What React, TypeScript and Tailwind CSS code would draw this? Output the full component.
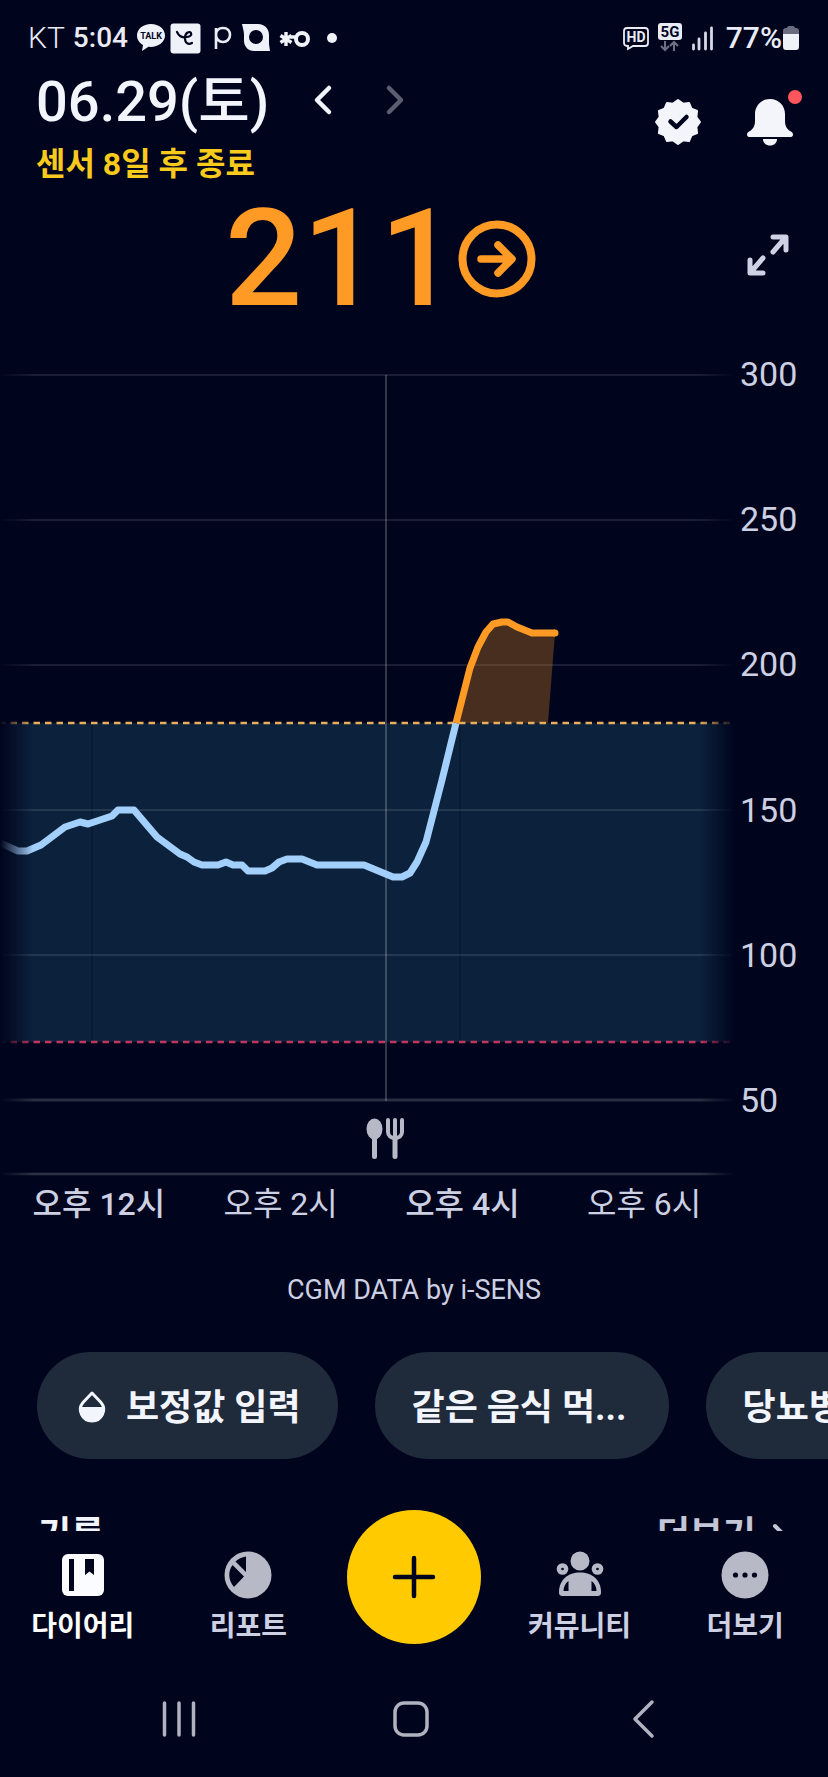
import type { ReactNode } from "react";

const GRID_LEVELS = [300, 250, 200, 150, 100, 50];

const HOURS = [
  { label: "오후 12시", major: true },
  { label: "오후 2시", major: false },
  { label: "오후 4시", major: true },
  { label: "오후 6시", major: false },
];

const IN_RANGE =
  "0,469 18,477 27,477 41,471 53,462 65,453 80,448 88,450 112,442 118,436 134,436 157,463 180,480 187,483 194,488 202,491 218,491 226,488 233,491 242,491 248,497 265,497 272,494 279,488 287,485 302,485 317,491 364,491 393,503 402,503 410,499 417,488 426,468 434,437 442,406 456,349";
const ABOVE_RANGE =
  "456,349 470,294 478,273 486,258 493,250 502,248 508,248 517,253 532,259 555,259";

// 12-pointed rosette, points alternate between the outer and inner radius
const ROSETTE = Array.from({ length: 24 }, (_, i) => {
  const r = i % 2 === 0 ? 22 : 19;
  const a = (i * Math.PI) / 12;
  return `${(24 + r * Math.sin(a)).toFixed(2)},${(24 - r * Math.cos(a)).toFixed(2)}`;
}).join(" ");

function StatusBar() {
  return (
    <div className="flex h-16 items-center justify-between pt-3 pl-7 pr-7 text-[#e9ebf5]">
      <div className="flex items-center">
        <span className="text-3xl font-light leading-9">KT</span>
        <span className="ml-2 text-[28px] font-medium leading-9">5:04</span>
        <svg className="ml-2 h-[30px] w-[30px] overflow-visible" viewBox="0 0 30 30">
          <path d="M15 1C7 1 1 6 1 12.500c0 4 2.500 7.500 6 9.500l-1 6 6.500-4.200c8.500 1 16.500-4 16.500-11.300C29 6 23 1 15 1z" fill="#f0f2fa" />
          <text x="15" y="16" textAnchor="middle" fontSize="9" fontWeight="700" fill="#00051d">TALK</text>
        </svg>
        <svg className="ml-1 h-[31px] w-[31px]" viewBox="0 0 31 31">
          <rect x="0.500" y="0.500" width="30" height="30" rx="3" fill="#f0f2fa" />
          <path d="M7 9c2 4 5 6 9 5 4 0 6-2 5-4s-6-1-6 5c0 5 3 7 7 5" fill="none" stroke="#00051d" strokeWidth="2.200" strokeLinecap="round" />
        </svg>
        <svg className="ml-3 h-[30px] w-5" viewBox="0 0 20 30">
          <path d="M3 26V5M3 12c0-4 2.500-7 7-7s7 3 7 7-3 7-7 7-7-3-7-7z" fill="none" stroke="#e9ebf5" strokeWidth="2.600" />
        </svg>
        <svg className="ml-2 h-[30px] w-[30px]" viewBox="0 0 30 30">
          <path fillRule="evenodd" d="M1 1h16c7 0 11 5 11 11v9l1 7H13C7 28 3 23 3 18v-6C3 8 2 6 1 1zM15 7a7 7 0 1 0 0 14a7 7 0 1 0 0-14z" fill="#f0f2fa" />
        </svg>
        <svg className="ml-2 h-[30px] w-8" viewBox="0 0 32 30">
          <path d="M7 9v14M1.500 12.500l11 7M12.500 12.500l-11 7M11 14h6" fill="none" stroke="#f0f2fa" strokeWidth="3.400" />
          <circle cx="23" cy="16" r="6" fill="none" stroke="#f0f2fa" strokeWidth="4" />
        </svg>
        <span className="ml-4 size-[10px] rounded-full bg-[#f0f2fa]" />
      </div>

      <div className="flex items-center">
        <svg className="h-[26px] w-7 overflow-visible" viewBox="0 0 28 26">
          <path d="M5 3h18a3 3 0 0 1 3 3v12a3 3 0 0 1-3 3H11l-5 3v-3H5a3 3 0 0 1-3-3V6a3 3 0 0 1 3-3z" fill="none" stroke="#e9ebf5" strokeWidth="1.800" />
          <text x="14" y="17" textAnchor="middle" fontSize="14" fontWeight="700" fill="#e9ebf5">HD</text>
        </svg>
        <svg className="ml-2 h-[30px] w-6 overflow-visible" viewBox="0 0 24 30">
          <rect width="24" height="17" rx="3" fill="#e9ebf5" />
          <text x="12" y="14" textAnchor="middle" fontSize="15" fontWeight="700" fill="#00051d">5G</text>
          <path d="M7 18v9m-4-4l4 4 4-4M16 28v-9m-4 4l4-4 4 4" fill="none" stroke="#6d7085" strokeWidth="2" />
        </svg>
        <svg className="ml-2 h-[26px] w-6" viewBox="0 0 24 26">
          <path d="M3.500 20v4M9 14v10M15.500 8v16M21.500 3v21" stroke="#d5d8e6" strokeWidth="2.800" strokeLinecap="round" />
        </svg>
        <span className="ml-3 text-3xl font-medium leading-9">77%</span>
        <svg className="h-[26px] w-[18px]" viewBox="0 0 18 26">
          <path d="M5 3c0-1 1-2 2-2h4c1 0 2 1 2 2h1c2 0 3 1 3 3v3H1V6c0-2 1-3 3-3z" fill="#6a6c80" />
          <path d="M1 9h16v12c0 3-1 4-3 4H4c-2 0-3-1-3-4z" fill="#f0f2fa" />
        </svg>
      </div>
    </div>
  );
}

function Header() {
  return (
    <header className="flex items-start justify-between pl-9 pr-6">
      <div>
        <div className="flex items-center">
          <h1 className="pt-1 text-[56px] font-medium leading-[68px] text-[#f2f5fc]">06.29(토)</h1>
          <button aria-label="이전 날짜" className="ml-9 flex h-12 w-9 items-center justify-center">
            <svg className="h-8 w-6" viewBox="0 0 24 32">
              <path d="M18 4L6 16l12 12" fill="none" stroke="#f2f5fc" strokeWidth="4.500" strokeLinecap="round" strokeLinejoin="round" />
            </svg>
          </button>
          <button aria-label="다음 날짜" className="ml-9 flex h-12 w-9 items-center justify-center">
            <svg className="h-8 w-6" viewBox="0 0 24 32">
              <path d="M6 4l12 12L6 28" fill="none" stroke="#5b5e70" strokeWidth="4.500" strokeLinecap="round" strokeLinejoin="round" />
            </svg>
          </button>
        </div>
        <p className="mt-1 text-[32px] font-bold leading-[48px] text-[#f7ca1c]">센서 8일 후 종료</p>
      </div>

      <div className="mt-[34px] flex items-center gap-11 pr-[10px]">
        <button aria-label="인증">
          <svg className="size-12" viewBox="0 0 48 48">
            <polygon points={ROSETTE} fill="#f3f5fb" stroke="#f3f5fb" strokeWidth="2" strokeLinejoin="round" />
            <path d="M16.500 23.500l6 5.500 10-10" fill="none" stroke="#00051d" strokeWidth="4.500" strokeLinecap="round" strokeLinejoin="round" />
          </svg>
        </button>
        <button aria-label="알림" className="relative">
          <svg className="size-12" viewBox="0 0 48 48">
            <path d="M24 1C15 1 9 8 9 16v7c0 5-2 8-5 10-2 1-3 2-3 3.500S2 39 3 39h42c1 0 2-1 2-2.500S46 34 44 33c-3-2-5-5-5-10v-7C39 8 33 1 24 1z" fill="#f3f5fb" />
            <path d="M17 41h14c0 4-3 6.500-7 6.500s-7-2.500-7-6.500z" fill="#f3f5fb" />
          </svg>
          <span className="absolute -right-2 -top-2 size-[14px] rounded-full bg-[#ff565c]" />
        </button>
      </div>
    </header>
  );
}

function Reading() {
  return (
    <section className="mt-2 flex h-[126px] items-center pl-4 pr-[38px]">
      <div className="flex flex-1 items-center justify-center">
        <strong className="text-[136px] font-medium leading-[126px] text-[#ff9a24]">211</strong>
        <svg className="size-20" viewBox="0 0 80 80" role="img" aria-label="변화 없음">
          <circle cx="40" cy="40" r="34.500" fill="none" stroke="#ff9a24" strokeWidth="8" />
          <path d="M24 40h30M41 26l14 14-14 14" fill="none" stroke="#ff9a24" strokeWidth="7.500" strokeLinecap="round" strokeLinejoin="round" />
        </svg>
      </div>
      <button aria-label="확대" className="mb-2">
        <svg className="size-11" viewBox="0 0 44 44">
          <path d="M27 4h13v13M39 5L27 19M4 27v13h13M5 39l12-14" fill="none" stroke="#cfd2e4" strokeWidth="5" strokeLinecap="round" strokeLinejoin="round" />
        </svg>
      </button>
    </section>
  );
}

function Chart() {
  return (
    <section className="mt-[52px]">
      <div className="flex">
        <svg className="h-auto min-w-0 flex-1" viewBox="0 0 735 728" role="img" aria-label="혈당 그래프">
          <defs>
            <linearGradient id="edge" gradientUnits="userSpaceOnUse" x1="0" y1="0" x2="735" y2="0">
              <stop offset="0" stopColor="#fff" stopOpacity="0" />
              <stop offset="0.045" stopColor="#fff" />
              <stop offset="0.952" stopColor="#fff" />
              <stop offset="1" stopColor="#fff" stopOpacity="0" />
            </linearGradient>
            <mask id="fade" maskUnits="userSpaceOnUse" x="0" y="0" width="735" height="728">
              <rect width="735" height="728" fill="url(#edge)" />
            </mask>
          </defs>
          <g mask="url(#fade)">
            <rect y="349" width="735" height="319" fill="#0c223c" />
            <path d="M92 349v319M460 349v319" stroke="#081b34" strokeWidth="2" />
            {GRID_LEVELS.map((level, i) => (
              <path
                key={level}
                d={`M0 ${1 + i * 145}H735`}
                stroke="#fff"
                strokeOpacity={level === 50 ? 0.16 : 0.1}
                strokeWidth={level === 50 ? 3 : 2}
              />
            ))}
            <path d="M386 1v726" stroke="#fff" strokeOpacity="0.2" strokeWidth="2" />
            <polygon points={`${ABOVE_RANGE} 548,349`} fill="#ff9a24" fillOpacity="0.28" />
            <path d="M-1 349H735" stroke="#e8ae5c" strokeWidth="2.500" strokeDasharray="6.5 5" />
            <path d="M-1 668H735" stroke="#c2355f" strokeWidth="2.500" strokeDasharray="6.5 5" />
            <polyline points={IN_RANGE} fill="none" stroke="#a3cffb" strokeWidth="7" strokeLinejoin="round" />
            <polyline points={ABOVE_RANGE} fill="none" stroke="#ff9a24" strokeWidth="7" strokeLinejoin="round" />
            <circle cx="555" cy="259" r="3.500" fill="#ff9a24" />
          </g>
        </svg>
        <div className="flex w-[93px] flex-col justify-between pb-[2px] pl-[5px] text-[34px] text-[#cdd0e2]">
          {GRID_LEVELS.map((level) => (
            <span key={level} className="flex h-0 items-center leading-10">
              {level}
            </span>
          ))}
        </div>
      </div>

      <div className="pr-[93px]">
        <svg className="h-auto w-full" viewBox="0 0 735 74">
          <g fill="#b7b9c6">
            <ellipse cx="374.500" cy="27" rx="8" ry="10.500" />
            <rect x="372" y="34" width="5" height="23" rx="2.500" />
            <rect x="392.500" y="34" width="5" height="23" rx="2.500" />
          </g>
          <path d="M388 18v12c0 4 3 6 7 6s7-2 7-6V18M395 18v18" fill="none" stroke="#b7b9c6" strokeWidth="4" strokeLinecap="round" />
          <path d="M0 72H735" stroke="url(#line)" strokeWidth="2.500" />
          <defs>
            <linearGradient id="line" gradientUnits="userSpaceOnUse" x1="0" y1="0" x2="735" y2="0">
              <stop offset="0" stopColor="#2e3144" stopOpacity="0" />
              <stop offset="0.045" stopColor="#2e3144" />
              <stop offset="0.952" stopColor="#2e3144" />
              <stop offset="1" stopColor="#2e3144" stopOpacity="0" />
            </linearGradient>
          </defs>
        </svg>
        <div className="grid h-14 grid-cols-4 items-center pl-2 text-center text-[32px] leading-[52px] text-[#cdd0e2]">
          {HOURS.map(({ label, major }) => (
            <span key={label} className={major ? "font-medium" : "font-normal"}>
              {label}
            </span>
          ))}
        </div>
      </div>
    </section>
  );
}

function Chip({ icon, children }: { icon?: ReactNode; children: ReactNode }) {
  return (
    <button className="flex h-[107px] min-w-[294px] shrink-0 items-center gap-[18px] whitespace-nowrap rounded-full bg-[#1f2a3b] px-[37px] pt-1 text-4xl font-bold text-[#f2f5fc]">
      {icon}
      {children}
    </button>
  );
}

function DropIcon() {
  return (
    <svg className="ml-[2px] h-9 w-8" viewBox="0 0 32 36">
      <path d="M16 3l9 9.500c6 7 1 18.500-9 18.500S1 19.500 7 12.500z" fill="none" stroke="#f2f5fc" strokeWidth="3" strokeLinejoin="round" />
      <path d="M3.500 17h25c1 8-4 15-12.500 15S2.500 25 3.500 17z" fill="#f2f5fc" />
    </svg>
  );
}

function Tab({ label, active, children }: { label: string; active?: boolean; children: ReactNode }) {
  return (
    <a href="#" className={`flex flex-col items-center pt-5 ${active ? "text-white" : "text-[#cdd0e2]"}`}>
      <svg className="size-12" viewBox="0 0 48 48">
        {children}
      </svg>
      <span className="mt-[10px] text-[28px] font-bold leading-9">{label}</span>
    </a>
  );
}

function TabBar() {
  return (
    <nav className="grid h-[129px] grid-cols-5">
      <Tab label="다이어리" active>
        <rect x="3" y="3" width="42" height="42" rx="6" fill="#fbfcff" />
        <path d="M10 8h5v32h-5zM26 8h9v16l-4.500-3.500L26 24z" fill="#00051d" />
      </Tab>
      <Tab label="리포트">
        <circle cx="24" cy="24" r="23.500" fill="#b7b9c6" />
        <path d="M22 5.500V21L11.500 10.500C14 8 18 6 22 5.500zM8.500 14L20 25.500 10 36C4 29 4 20 8.500 14z" fill="#00051d" />
      </Tab>
      <div className="flex justify-center">
        <button aria-label="추가" className="relative -mt-[21px] flex size-[134px] items-center justify-center rounded-full bg-[#ffca00]">
          <svg className="size-11" viewBox="0 0 44 44">
            <path d="M22 3v38M3 22h38" stroke="#00051d" strokeWidth="4.500" strokeLinecap="round" />
          </svg>
        </button>
      </div>
      <Tab label="커뮤니티">
        <circle cx="24" cy="10" r="9.500" fill="#b7b9c6" />
        <g fill="none" stroke="#b7b9c6" strokeWidth="4.500">
          <circle cx="6.500" cy="18" r="3.600" />
          <circle cx="41.500" cy="18" r="3.600" />
        </g>
        <path d="M24 21.500C12 21.500 3 29 3 41c0 3 1 4 4 4h34c3 0 4-1 4-4 0-12-9-19.500-21-19.500z" fill="#b7b9c6" />
        <path d="M12.500 30v10H7.500c0-4 2-8 5-10zM35.500 30v10h5c0-4-2-8-5-10z" fill="#00051d" />
      </Tab>
      <Tab label="더보기">
        <circle cx="24" cy="24" r="23.500" fill="#b7b9c6" />
        <g fill="#00051d">
          <circle cx="14.500" cy="24" r="2.600" />
          <circle cx="24" cy="24" r="2.600" />
          <circle cx="33.500" cy="24" r="2.600" />
        </g>
      </Tab>
    </nav>
  );
}

function SystemNav() {
  return (
    <div className="flex h-[117px] items-center justify-between pl-[159px] pr-[165px]">
      <button aria-label="최근 앱">
        <svg className="size-10" viewBox="0 0 40 40">
          <path d="M5.500 4v32M20 4v32M34.500 4v32" stroke="#b0b2c0" strokeWidth="3.500" strokeLinecap="round" />
        </svg>
      </button>
      <button aria-label="홈">
        <svg className="size-10" viewBox="0 0 40 40">
          <rect x="4" y="4" width="32" height="32" rx="9" fill="none" stroke="#b0b2c0" strokeWidth="3.500" />
        </svg>
      </button>
      <button aria-label="뒤로">
        <svg className="size-10" viewBox="0 0 40 40">
          <path d="M29 3L12 20l17 17" fill="none" stroke="#b0b2c0" strokeWidth="3.500" strokeLinecap="round" strokeLinejoin="round" />
        </svg>
      </button>
    </div>
  );
}

export default function App() {
  return (
    <div className="flex h-screen flex-col overflow-hidden bg-[#00051d] font-[Roboto,'Noto_Sans_CJK_KR',sans-serif]">
      <main className="min-h-0 flex-1 overflow-hidden">
        <StatusBar />
        <Header />
        <Reading />
        <Chart />
        <p className="mt-10 text-center text-[27px] leading-9 text-[#cdd0e2]">CGM DATA by i-SENS</p>

        <div className="mt-11 flex gap-[37px] overflow-hidden pl-[37px]">
          <Chip icon={<DropIcon />}>보정값 입력</Chip>
          <Chip>같은 음식 먹...</Chip>
          <Chip>당뇨병</Chip>
        </div>

        <section className="mt-14 flex items-start justify-between pl-[38px] pr-10">
          <h2 className="text-4xl font-bold leading-10 text-[#f2f5fc]">기록</h2>
          <a href="#" className="flex items-center gap-4 text-4xl font-bold leading-10 text-[#c3c6d6]">
            더보기
            <svg className="h-6 w-4" viewBox="0 0 16 24">
              <path d="M3 3l9 9-9 9" fill="none" stroke="#c3c6d6" strokeWidth="4" strokeLinecap="round" />
            </svg>
          </a>
        </section>
      </main>
      <TabBar />
      <SystemNav />
    </div>
  );
}
